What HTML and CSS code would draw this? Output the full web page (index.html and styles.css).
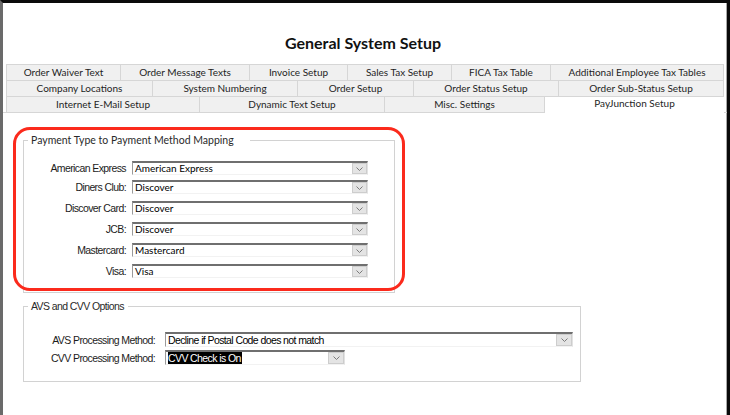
FILE: index.html
```html
<!DOCTYPE html>
<html lang="en">
<head>
<meta charset="utf-8">
<title>General System Setup</title>
<link rel="stylesheet" href="styles.css">
</head>
<body>
<div class="window">
  <h1 class="title">General System Setup</h1>
  <div class="tabs">
    <div class="tab-row row-1">
      <div class="tab">Order Waiver Text</div>
      <div class="tab">Order Message Texts</div>
      <div class="tab">Invoice Setup</div>
      <div class="tab">Sales Tax Setup</div>
      <div class="tab">FICA Tax Table</div>
      <div class="tab">Additional Employee Tax Tables</div>
    </div>
    <div class="tab-row row-2">
      <div class="tab">Company Locations</div>
      <div class="tab">System Numbering</div>
      <div class="tab">Order Setup</div>
      <div class="tab">Order Status Setup</div>
      <div class="tab">Order Sub-Status Setup</div>
    </div>
    <div class="tab-row row-3">
      <div class="tab">Internet E-Mail Setup</div>
      <div class="tab">Dynamic Text Setup</div>
      <div class="tab">Misc. Settings</div>
      <div class="tab tab-active">PayJunction Setup</div>
    </div>
  </div>
  <div class="panel">
    <fieldset class="group group-map">
      <legend class="legend legend-wide">Payment Type to Payment Method Mapping</legend>
      <div class="rows rows-map">
        <div class="row row-tight">
          <span class="label label-map">American Express</span>
          <div class="combo combo-map"><span class="combo-text">American Express</span><span class="combo-btn"><svg width="7" height="4" viewBox="0 0 7 4"><path d="M0.5 0.5 L3.5 3.5 L6.5 0.5" fill="none" stroke="#7a7a7a" stroke-width="1"/></svg></span></div>
        </div>
        <div class="row">
          <span class="label label-map">Diners Club:</span>
          <div class="combo combo-map"><span class="combo-text">Discover</span><span class="combo-btn"><svg width="7" height="4" viewBox="0 0 7 4"><path d="M0.5 0.5 L3.5 3.5 L6.5 0.5" fill="none" stroke="#7a7a7a" stroke-width="1"/></svg></span></div>
        </div>
        <div class="row">
          <span class="label label-map">Discover Card:</span>
          <div class="combo combo-map"><span class="combo-text">Discover</span><span class="combo-btn"><svg width="7" height="4" viewBox="0 0 7 4"><path d="M0.5 0.5 L3.5 3.5 L6.5 0.5" fill="none" stroke="#7a7a7a" stroke-width="1"/></svg></span></div>
        </div>
        <div class="row">
          <span class="label label-map">JCB:</span>
          <div class="combo combo-map"><span class="combo-text">Discover</span><span class="combo-btn"><svg width="7" height="4" viewBox="0 0 7 4"><path d="M0.5 0.5 L3.5 3.5 L6.5 0.5" fill="none" stroke="#7a7a7a" stroke-width="1"/></svg></span></div>
        </div>
        <div class="row">
          <span class="label label-map">Mastercard:</span>
          <div class="combo combo-map"><span class="combo-text">Mastercard</span><span class="combo-btn"><svg width="7" height="4" viewBox="0 0 7 4"><path d="M0.5 0.5 L3.5 3.5 L6.5 0.5" fill="none" stroke="#7a7a7a" stroke-width="1"/></svg></span></div>
        </div>
        <div class="row">
          <span class="label label-map">Visa:</span>
          <div class="combo combo-map"><span class="combo-text">Visa</span><span class="combo-btn"><svg width="7" height="4" viewBox="0 0 7 4"><path d="M0.5 0.5 L3.5 3.5 L6.5 0.5" fill="none" stroke="#7a7a7a" stroke-width="1"/></svg></span></div>
        </div>
      </div>
    </fieldset>
    <fieldset class="group group-avs">
      <legend class="legend legend-narrow">AVS and CVV Options</legend>
      <div class="rows rows-avs">
        <div class="row">
          <span class="label label-avs">AVS Processing Method:</span>
          <div class="combo combo-avs combo-wide"><span class="combo-text text-narrow">Decline if Postal Code does not match</span><span class="combo-btn btn-avs"><svg width="7" height="4" viewBox="0 0 7 4"><path d="M0.5 0.5 L3.5 3.5 L6.5 0.5" fill="none" stroke="#7a7a7a" stroke-width="1"/></svg></span></div>
        </div>
        <div class="row">
          <span class="label label-avs">CVV Processing Method:</span>
          <div class="combo combo-avs combo-short"><span class="combo-text text-narrow"><span class="selected">CVV Check is On</span></span><span class="combo-btn btn-avs"><svg width="7" height="4" viewBox="0 0 7 4"><path d="M0.5 0.5 L3.5 3.5 L6.5 0.5" fill="none" stroke="#7a7a7a" stroke-width="1"/></svg></span></div>
        </div>
      </div>
    </fieldset>
    <div class="annotation"></div>
  </div>
</div>
</body>
</html>
```

FILE: styles.css
```css
html, body {
  margin: 0;
  padding: 0;
  background: #ffffff;
}
body {
  width: 730px;
  height: 415px;
  overflow: hidden;
}
.window {
  box-sizing: border-box;
  width: 730px;
  height: 415px;
  border-top: 3px solid #0a0a0a;
  border-left: 3px solid #6a6a6a;
  border-right: 3px solid #0a0a0a;
  box-shadow: inset -1px 0 0 #a8a8a8;
  background: #ffffff;
  display: flex;
  flex-direction: column;
}
.title {
  box-sizing: border-box;
  margin: 0;
  height: 61px;
  padding: 30px 4px 0 0;
  line-height: 20px;
  font-family: Lato, "Liberation Sans", sans-serif;
  font-weight: 700;
  font-size: 16px;
  color: #111;
  text-align: center;
}
.tabs {
  margin: 0 3px;
  font-family: Lato, "Liberation Sans", sans-serif;
  font-size: 10px;
  color: #1e1e1e;
}
.tab-row {
  display: grid;
  height: 16px;
  box-sizing: border-box;
  border-top: 1px solid #d6d6d6;
  border-right: 1px solid #d6d6d6;
  background: #f0f0f0;
}
.row-1 { grid-template-columns: 114px 129px 98px 104px 99px 1fr; }
.row-2 { grid-template-columns: 146px 145px 116px 145px 1fr; }
.row-3 { grid-template-columns: 193px 185px 160px 1fr; }
.tab {
  border-left: 1px solid #d6d6d6;
  text-align: center;
  line-height: 15px;
  white-space: nowrap;
  overflow: hidden;
}
.tab-active {
  position: relative;
  z-index: 1;
  background: #ffffff;
  margin: -1px -1px -1px 0;
  border-top: 1px solid #d6d6d6;
  line-height: 13px;
  padding-bottom: 4px;
}
.panel {
  position: relative;
  flex: 1;
  border-top: 1px solid #d6d6d6;
  padding: 0;
}
.group {
  margin: 0 0 0 20px;
  padding: 0 0 0 4px;
  border: 1px solid #d2d2d2;
  min-width: 0;
  box-sizing: border-box;
}
.group-map {
  margin-top: 21px;
  width: 372px;
  padding-top: 15px;
  padding-bottom: 14px;
}
.group-avs {
  margin-top: 7px;
  width: 558px;
  padding-top: 20px;
  padding-bottom: 16px;
}
.legend {
  line-height: 12px;
  color: #2a2a2a;
}
.legend-wide {
  font-family: Lato, "Liberation Sans", sans-serif;
  font-size: 10.5px;
  padding: 0 16px 0 3px;
}
.legend-narrow {
  font-family: "Liberation Sans", Arial, sans-serif;
  font-size: 10.5px;
  letter-spacing: -0.6px;
  padding: 0 4px 0 3px;
}
.rows {
  display: flex;
  flex-direction: column;
  gap: 7px;
}
.rows-avs {
  gap: 3px;
}
.row {
  display: flex;
  align-items: center;
  height: 14px;
}
.rows-avs .row {
  height: 15px;
}
.row-tight {
  margin-bottom: -2px;
}
.label {
  font-family: "Liberation Sans", Arial, sans-serif;
  font-size: 10.5px;
  line-height: 12px;
  letter-spacing: -0.6px;
  color: #1c1c1c;
  text-align: right;
  white-space: nowrap;
}
.label-map {
  width: 98px;
  margin-right: 6px;
}
.label-avs {
  width: 127px;
  margin-right: 10px;
}
.combo {
  box-sizing: border-box;
  display: flex;
  align-items: stretch;
  background: #ffffff;
  border-top: 2px solid #6f6f6f;
  border-left: 1px solid #9a9a9a;
  border-right: 1px solid #e2e2e2;
  border-bottom: 1px solid #f2f2f2;
}
.combo-map {
  width: 236px;
  height: 14px;
}
.combo-avs {
  height: 15px;
}
.combo-wide { width: 408px; }
.combo-short { width: 180px; }
.combo-text {
  flex: 1;
  padding-left: 2px;
  font-family: Lato, "Liberation Sans", sans-serif;
  font-size: 10px;
  line-height: 11px;
  color: #000;
  white-space: nowrap;
  overflow: hidden;
}
.text-narrow {
  font-family: "Liberation Sans", Arial, sans-serif;
  font-size: 10.5px;
  letter-spacing: -0.6px;
  line-height: 12px;
}
.selected {
  background: #000;
  color: #fff;
  padding-right: 1px;
}
.combo-btn {
  box-sizing: border-box;
  width: 15px;
  background: #e4e4e4;
  border: 1px solid #cdcdcd;
  display: flex;
  align-items: center;
  justify-content: center;
}
.btn-avs {
  width: 16px;
}
.annotation {
  position: absolute;
  left: 10px;
  top: 14px;
  width: 392px;
  height: 164px;
  box-sizing: border-box;
  border: 3px solid #fb2a1c;
  border-radius: 17px;
  pointer-events: none;
}
```
